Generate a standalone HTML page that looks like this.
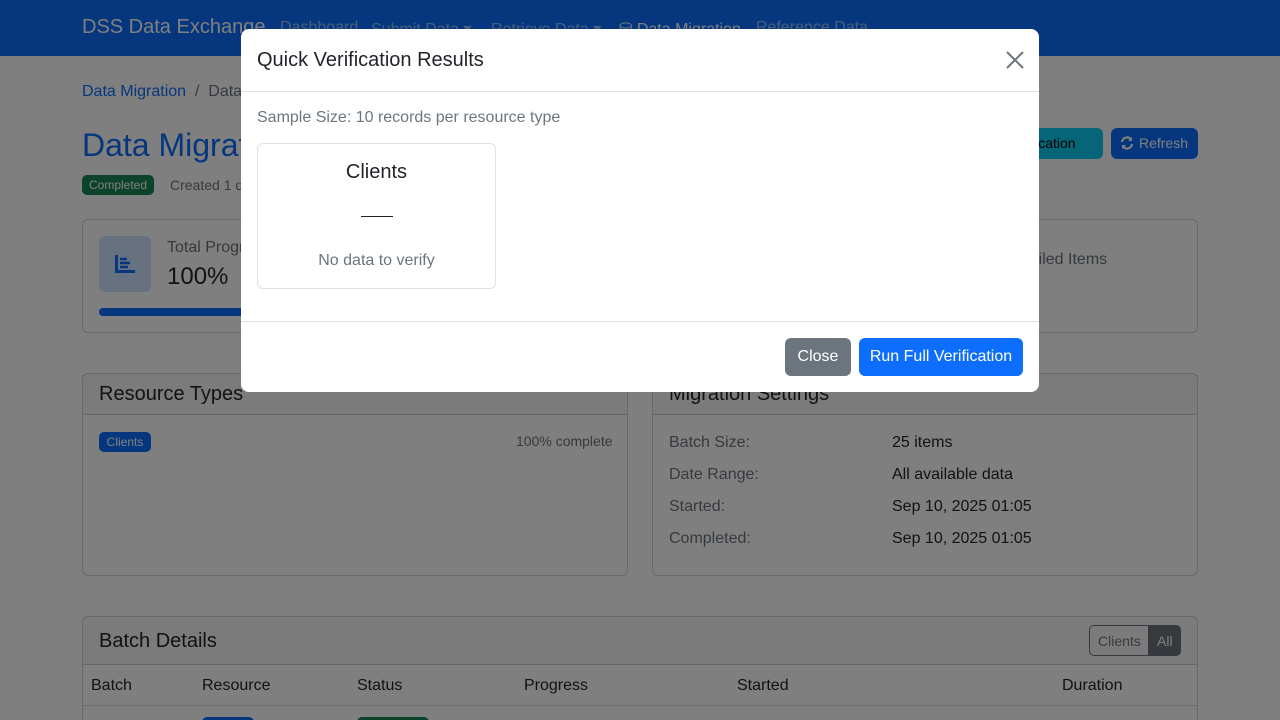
<!DOCTYPE html>
<html style="overflow:hidden"><head><meta charset="utf-8"><style>
*{box-sizing:border-box;margin:0;padding:0}
html,body{width:1280px;height:720px;overflow:hidden}
body{position:relative;background:#fff;font-family:"Liberation Sans",sans-serif;color:#212529}
.a{position:absolute;white-space:nowrap}
.nav{left:0;top:0;width:1280px;height:56px;background:#0d6efd}
.nl{color:rgba(255,255,255,.55);font-size:16px;top:19px}
.card{border:1px solid rgba(0,0,0,.175);border-radius:6px;background:#fff}
.hd{border-bottom:1px solid rgba(0,0,0,.175);background:rgba(0,0,0,.03)}
.ov{left:0;top:0;width:1280px;height:720px;background:rgba(0,0,0,.5)}
.btn{border-radius:6px;color:#fff;font-size:16px;text-align:center}
</style></head><body>
<div class="a nav"></div>
<div class="a" style="left:82px;top:16px;font-size:20px;color:#fff">DSS Data Exchange</div>
<div class="a nl" style="left:280px">Dashboard</div>
<div class="a nl" style="left:371px">Submit Data ▾</div>
<div class="a nl" style="left:491px">Retrieve Data ▾</div>
<div class="a nl" style="left:619px;color:#fff">⛁ Data Migration</div>
<div class="a nl" style="left:756px">Reference Data</div>

<div class="a" style="left:82px;top:83px;font-size:16px;color:#0d6efd">Data Migration <span style="color:#6c757d">&nbsp;/&nbsp; Data Migration Details</span></div>
<div class="a" style="left:82px;top:127px;font-size:32px;color:#0d6efd">Data Migration #1</div>
<div class="a" style="left:82px;top:175px;height:20px;width:72px;background:#198754;color:#fff;font-size:12px;border-radius:5px;text-align:center;line-height:20px">Completed</div>
<div class="a" style="left:170px;top:177px;font-size:14px;color:#6c757d">Created 1 day ago</div>
<div class="a btn" style="left:940px;top:128px;width:163px;height:31px;background:#0dcaf0;color:#000;font-size:14px;line-height:31px">Quick Verification</div>
<div class="a btn" style="left:1111px;top:128px;width:87px;height:31px;background:#0d6efd;font-size:14px;line-height:31px;padding-left:18px">Refresh</div>
<svg class="a" style="left:1120px;top:136px" width="14" height="14" viewBox="0 0 14 14"><path d="M2 6A5 5 0 0 1 11 3.5M12 8A5 5 0 0 1 3 10.5" stroke="#fff" stroke-width="2.2" fill="none"/><path d="M12 1v4H8zM2 13V9h4z" fill="#fff"/></svg>

<div class="a card" style="left:82px;top:219px;width:1116px;height:114px"></div>
<div class="a" style="left:99px;top:236px;width:52px;height:56px;background:#cfe2ff;border-radius:6px"></div>
<svg class="a" style="left:115px;top:255px" width="20" height="18" viewBox="0 0 20 18"><path d="M1.5 0V16.5H20" stroke="#0d6efd" stroke-width="3" fill="none"/><path d="M5 4h7M5 8h10M5 12h8" stroke="#0d6efd" stroke-width="2.4"/></svg>
<div class="a" style="left:167px;top:239px;font-size:16px;color:#6c757d">Total Progress</div>
<div class="a" style="left:167px;top:263px;font-size:24px">100%</div>
<div class="a" style="left:99px;top:308px;width:500px;height:8px;background:#0d6efd;border-radius:4px"></div>
<div class="a" style="left:1020px;top:251px;font-size:16px;color:#6c757d">Failed Items</div>

<div class="a card" style="left:82px;top:373px;width:546px;height:203px"></div>
<div class="a hd" style="left:83px;top:374px;width:544px;height:41px"></div>
<div class="a" style="left:99px;top:383px;font-size:20px">Resource Types</div>
<div class="a" style="left:99px;top:432px;width:52px;height:20px;background:#0d6efd;color:#fff;font-size:12px;border-radius:5px;text-align:center;line-height:20px">Clients</div>
<div class="a" style="left:516px;top:433px;font-size:14px;color:#6c757d">100% complete</div>

<div class="a card" style="left:652px;top:373px;width:546px;height:203px"></div>
<div class="a hd" style="left:653px;top:374px;width:544px;height:41px"></div>
<div class="a" style="left:669px;top:383px;font-size:20px">Migration Settings</div>
<div class="a" style="left:669px;top:427px;font-size:16px;color:#6c757d;line-height:32px">Batch Size:<br>Date Range:<br>Started:<br>Completed:</div>
<div class="a" style="left:892px;top:427px;font-size:16px;line-height:32px">25 items<br>All available data<br>Sep 10, 2025 01:05<br>Sep 10, 2025 01:05</div>

<div class="a card" style="left:82px;top:616px;width:1116px;height:110px;border-bottom:none;border-radius:6px 6px 0 0"></div>
<div class="a hd" style="left:83px;top:617px;width:1114px;height:48px"></div>
<div class="a" style="left:99px;top:630px;font-size:20px">Batch Details</div>
<div class="a" style="left:1089px;top:625px;width:92px;height:31px;border:1px solid #6c757d;border-radius:5px"></div>
<div class="a" style="left:1148px;top:625px;width:33px;height:31px;background:#6c757d;border-radius:0 5px 5px 0"></div>
<div class="a" style="left:1098px;top:633px;font-size:14px;color:#6c757d">Clients</div>
<div class="a" style="left:1157px;top:633px;font-size:14px;color:#fff">All</div>
<div class="a" style="top:677px;left:91px;font-size:16px">Batch</div>
<div class="a" style="top:677px;left:202px;font-size:16px">Resource</div>
<div class="a" style="top:677px;left:357px;font-size:16px">Status</div>
<div class="a" style="top:677px;left:524px;font-size:16px">Progress</div>
<div class="a" style="top:677px;left:737px;font-size:16px">Started</div>
<div class="a" style="top:677px;left:1062px;font-size:16px">Duration</div>
<div class="a" style="left:83px;top:705px;width:1114px;height:1px;background:#dee2e6"></div>
<div class="a" style="left:202px;top:717px;width:52px;height:6px;background:#0d6efd;border-radius:5px 5px 0 0"></div>
<div class="a" style="left:357px;top:717px;width:72px;height:6px;background:#198754;border-radius:5px 5px 0 0"></div>

<div class="a ov"></div>

<div class="a" style="left:241px;top:29px;width:798px;height:363px;background:#fff;border-radius:8px"></div>
<div class="a" style="left:257px;top:49px;font-size:20px">Quick Verification Results</div>
<svg class="a" style="left:1006px;top:51px" width="18" height="18" viewBox="0 0 18 18"><path d="M1 1L17 17M17 1L1 17" stroke="#6c757d" stroke-width="2"/></svg>
<div class="a" style="left:241px;top:91px;width:798px;height:1px;background:#dee2e6"></div>
<div class="a" style="left:257px;top:109px;font-size:16px;color:#6c757d">Sample Size: 10 records per resource type</div>
<div class="a" style="left:257px;top:143px;width:239px;height:146px;border:1px solid #dee2e6;border-radius:6px"></div>
<div class="a" style="left:257px;top:161px;width:239px;text-align:center;font-size:20px">Clients</div>
<div class="a" style="left:361px;top:216px;width:32px;height:1px;background:#212529"></div>
<div class="a" style="left:257px;top:252px;width:239px;text-align:center;font-size:16px;color:#6c757d">No data to verify</div>
<div class="a" style="left:241px;top:321px;width:798px;height:1px;background:#dee2e6"></div>
<div class="a btn" style="left:785px;top:338px;width:66px;height:38px;line-height:38px;background:#6c757d">Close</div>
<div class="a btn" style="left:859px;top:338px;width:164px;height:38px;line-height:38px;background:#0d6efd">Run Full Verification</div>
</body></html>
